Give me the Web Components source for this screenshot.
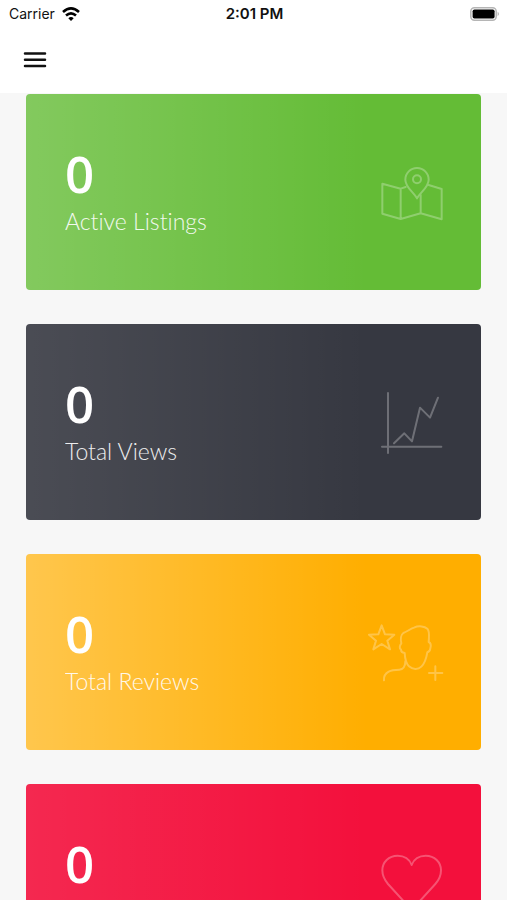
<!DOCTYPE html>
<html lang="en">
<head>
<meta charset="utf-8">
<meta name="viewport" content="width=device-width, initial-scale=1">
<title>Dashboard</title>
<style>
  body {
    margin: 0;
    background: #f7f7f7;
    font-family: Inter, "Liberation Sans", sans-serif;
  }
</style>
</head>
<body>
<listings-app>
  <status-bar slot="status" carrier="Carrier" time="2:01 PM"></status-bar>
  <nav-bar slot="nav"></nav-bar>
  <stat-card color="green" icon="map">
    0
    <span slot="label">Active Listings</span>
  </stat-card>
  <stat-card color="dark" icon="chart">
    0
    <span slot="label">Total Views</span>
  </stat-card>
  <stat-card color="yellow" icon="reviews">
    0
    <span slot="label">Total Reviews</span>
  </stat-card>
  <stat-card color="red" icon="heart">0</stat-card>
</listings-app>

<script>
const icons = {
  map: `
    <svg viewBox="12 12 240 228" aria-hidden="true">
      <path d="M137 111L122 116L67 101V191L122 207L182 190L245 208V117L206 105M122 116V207M182 135V190"/>
      <path d="M171 145C160 125 136 112 136 89A35 35 0 0 1 206 89C206 112 182 125 171 145Z"/>
      <circle cx="171" cy="88" r="12"/>
    </svg>`,
  chart: `
    <svg viewBox="12 12 240 228" aria-hidden="true">
      <path d="M84 39V219M66 200H244M102 190L133 160L156 184L180 83L210 113L234 53"/>
    </svg>`,
  reviews: `
    <svg viewBox="12 12 240 228" aria-hidden="true">
      <path d="M65 46L75 73L103 74L82 92L90 118L65 102L40 118L48 92L27 74L55 73Z"/>
      <path d="M130 69C141 65 150 57 162 53C177 46 194 49 202 56C210 65 207 79 206 96C213 99 213 108 211 115C210 122 207 126 202 127C199 145 194 160 184 170C174 180 158 179 147 169C139 161 135 149 134 129C127 128 123 125 123 119C117 115 119 106 124 100C121 88 123 74 130 69Z"/>
      <path d="M136 154C136 169 129 179 118 179C102 179 94 180 86 185C75 191 71 201 72 211"/>
      <path d="M207 189H247M226 169V210"/>
    </svg>`,
  heart: `
    <svg viewBox="12 27 240 228" aria-hidden="true">
      <path d="M155 90C149 72 132 62 113 62C86 62 67 82 67 106C67 122 73 134 84 147L155 225L226 147C238 134 243 122 243 106C243 82 224 62 197 62C178 62 161 72 155 90Z"/>
    </svg>`
};

class ListingsApp extends HTMLElement {
  constructor() {
    super();
    this.attachShadow({ mode: "open" }).innerHTML = `
      <style>
        :host {
          display: flex;
          flex-direction: column;
          height: 100vh;
        }
        header {
          flex: none;
          background: #fff;
        }
        main {
          flex: 1;
          min-height: 0;
          overflow-y: auto;
          scrollbar-width: none;
        }
        .cards {
          display: grid;
          gap: 34px;
          padding: 1px 26px 34px;
        }
      </style>
      <header>
        <slot name="status"></slot>
        <slot name="nav"></slot>
      </header>
      <main><div class="cards"><slot></slot></div></main>
    `;
  }
}

class StatusBar extends HTMLElement {
  constructor() {
    super();
    this.attachShadow({ mode: "open" });
  }

  connectedCallback() {
    this.shadowRoot.innerHTML = `
      <style>
        :host {
          display: grid;
          grid-template-columns: 1fr auto 1fr;
          align-items: center;
          height: 27px;
          padding: 0 7px 0 9px;
          color: #111;
          font-size: 14px;
          line-height: 20px;
        }
        .carrier {
          display: flex;
          align-items: center;
          gap: 7px;
        }
        .time {
          font-size: 15px;
          font-weight: 600;
        }
        .battery {
          justify-self: end;
        }
        svg {
          display: block;
        }
      </style>
      <div class="carrier">
        <span>${this.getAttribute("carrier")}</span>
        <svg width="18" height="14" viewBox="0 0 18 14" fill="none" stroke="#000" stroke-width="2.6" aria-hidden="true">
          <path d="M1 5Q9-2.2 17 5M4 8.6Q9 4.2 14 8.6"/>
          <path d="M9 14L6.3 11.2Q9 9 11.7 11.2Z" fill="#000" stroke="none"/>
        </svg>
      </div>
      <span class="time">${this.getAttribute("time")}</span>
      <svg class="battery" width="30" height="14" viewBox="0 0 30 14" aria-hidden="true">
        <rect x=".8" y=".8" width="25.4" height="12.4" rx="3.6" fill="#fff" stroke="#b5b5b5" stroke-width="1.5"/>
        <rect x="2.6" y="2.4" width="22" height="9.2" rx="1.8"/>
        <path d="M27.7 4.8Q30 7 27.7 9.2Z" fill="#aaa"/>
      </svg>
    `;
  }
}

class NavBar extends HTMLElement {
  constructor() {
    super();
    this.attachShadow({ mode: "open" }).innerHTML = `
      <style>
        :host {
          display: flex;
          align-items: center;
          height: 66px;
          padding: 0 20px;
        }
        button {
          display: grid;
          place-items: center;
          width: 30px;
          height: 30px;
          padding: 0;
          border: 0;
          background: none;
        }
      </style>
      <button type="button" aria-label="Menu">
        <svg width="24" height="18" viewBox="0 0 24 18" stroke="#111" stroke-width="2.5" stroke-linecap="round" aria-hidden="true">
          <path d="M2 2.6H22M2 8.8H22M2 15H22"/>
        </svg>
      </button>
    `;
  }
}

class StatCard extends HTMLElement {
  constructor() {
    super();
    this.attachShadow({ mode: "open" });
  }

  connectedCallback() {
    this.shadowRoot.innerHTML = `
      <style>
        :host {
          --shine: .2;
          display: flex;
          align-items: center;
          justify-content: space-between;
          box-sizing: border-box;
          min-height: 196px;
          padding: 0 37px 0 39px;
          border-radius: 4px;
          background: linear-gradient(to left, rgba(255, 255, 255, 0) 25%, rgba(255, 255, 255, var(--shine))) var(--base);
          color: #fff;
        }
        :host([color="green"]) { --base: #64bc36; }
        :host([color="dark"]) { --base: #363841; --shine: .1; }
        :host([color="yellow"]) { --base: #ffae00; --shine: .3; }
        :host([color="red"]) { --base: #f3103c; --shine: .1; }
        .value {
          font: 600 51px/52px "Open Sans", sans-serif;
        }
        .label {
          min-height: 32px;
          margin-top: 6px;
          font: 300 23px/32px Lato, sans-serif;
          font-variant-ligatures: none;
          opacity: .9;
        }
        svg {
          display: block;
          width: 80px;
          height: 76px;
          fill: none;
          stroke: #fff;
          stroke-width: 6;
          stroke-linecap: round;
          stroke-linejoin: round;
          opacity: .28;
        }
      </style>
      <div>
        <div class="value"><slot></slot></div>
        <div class="label"><slot name="label"></slot></div>
      </div>
      ${icons[this.getAttribute("icon")]}
    `;
  }
}

customElements.define("listings-app", ListingsApp);
customElements.define("status-bar", StatusBar);
customElements.define("nav-bar", NavBar);
customElements.define("stat-card", StatCard);
</script>
</body>
</html>
